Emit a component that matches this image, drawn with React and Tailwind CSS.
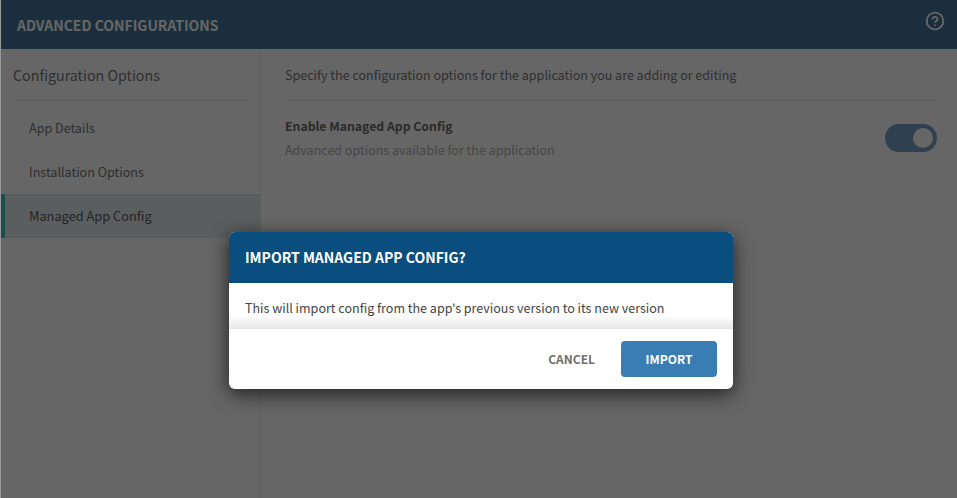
import { CircleHelp } from "lucide-react";

const font = { fontFamily: "'Noto Sans CJK SC', 'Liberation Sans', sans-serif" };

function NavItem({ label, active }) {
    return (
        <div className={`h-11 flex items-center border-l-4 pl-6 ${active ? "text-[12.8px] border-[#3bccc1] bg-[#e3ecea] text-[#5c5c5c]" : "text-[12.55px] border-transparent text-[#777]"}`}>
            {label}
        </div>
    );
}

export default function App() {
    return (
        <div className="relative h-[498px] w-[957px] overflow-hidden bg-white border-l border-[#999]" style={font}>
            {/* header */}
            <div className="h-[49px] bg-[#437498] flex items-center justify-between pl-4 pr-[12px]">
                <span className="text-sm font-bold text-white leading-none">ADVANCED CONFIGURATIONS</span>
                <CircleHelp size={20} strokeWidth={2.2} className="text-white -mt-[8px]" />
            </div>

            <div className="flex h-[449px]">
                {/* sidebar */}
                <div className="w-[260px] border-r border-[#f0f0f0]">
                    <div className="mx-3 h-[52px] pt-[2px] flex items-center border-b border-[#e4e4e4] text-[14.25px] leading-none text-[#777]">
                        Configuration Options
                    </div>
                    <div className="pt-[5px]">
                        <NavItem label="App Details" />
                        <NavItem label="Installation Options" />
                        <NavItem label="Managed App Config" active />
                    </div>
                </div>

                {/* main */}
                <div className="flex-1 pl-6 pr-5">
                    <div className="h-[52px] pt-[2px] flex items-center border-b border-[#e4e4e4] text-[12.53px] text-[#777]">
                        Specify the configuration options for the application you are adding or editing
                    </div>
                    <div className="flex items-center justify-between pt-[13px]">
                        <div>
                            <div className="text-[12.25px] font-bold leading-6 text-[#6c6c6c]">Enable Managed App Config</div>
                            <div className="text-[12.53px] leading-6 text-[#b0b0b0]">Advanced options available for the application</div>
                        </div>
                        <div className="h-7 w-[52px] rounded-full bg-[#76a4c8] flex items-center justify-end pr-1">
                            <div className="h-5 w-5 rounded-full bg-white" />
                        </div>
                    </div>
                </div>
            </div>

            {/* overlay + dialog */}
            <div className="absolute inset-0 bg-black/60 flex justify-center items-start pt-[232px] pl-[4px]">
                <div className="w-[504px] rounded-md bg-white overflow-hidden shadow-[0_5px_20px_rgba(0,0,0,0.7)]">
                    <div className="h-[51px] bg-[#094e7f] flex items-center px-4 pb-[2px] text-sm font-bold leading-none text-white">
                        IMPORT MANAGED APP CONFIG?
                    </div>
                    <div className="h-[46px] px-4 pt-[15px] text-[12.53px] leading-5 text-[#444] bg-gradient-to-b from-white from-[70%] to-[#e6e6e6]">
                        This will import config from the app's previous version to its new version
                    </div>
                    <div className="h-[60px] flex items-center justify-end gap-[26px] pr-4">
                        <button className="text-xs font-bold text-[#707070]">CANCEL</button>
                        <button className="h-9 w-24 rounded bg-[#3a7db3] text-xs font-bold text-white">IMPORT</button>
                    </div>
                </div>
            </div>
        </div>
    );
}
